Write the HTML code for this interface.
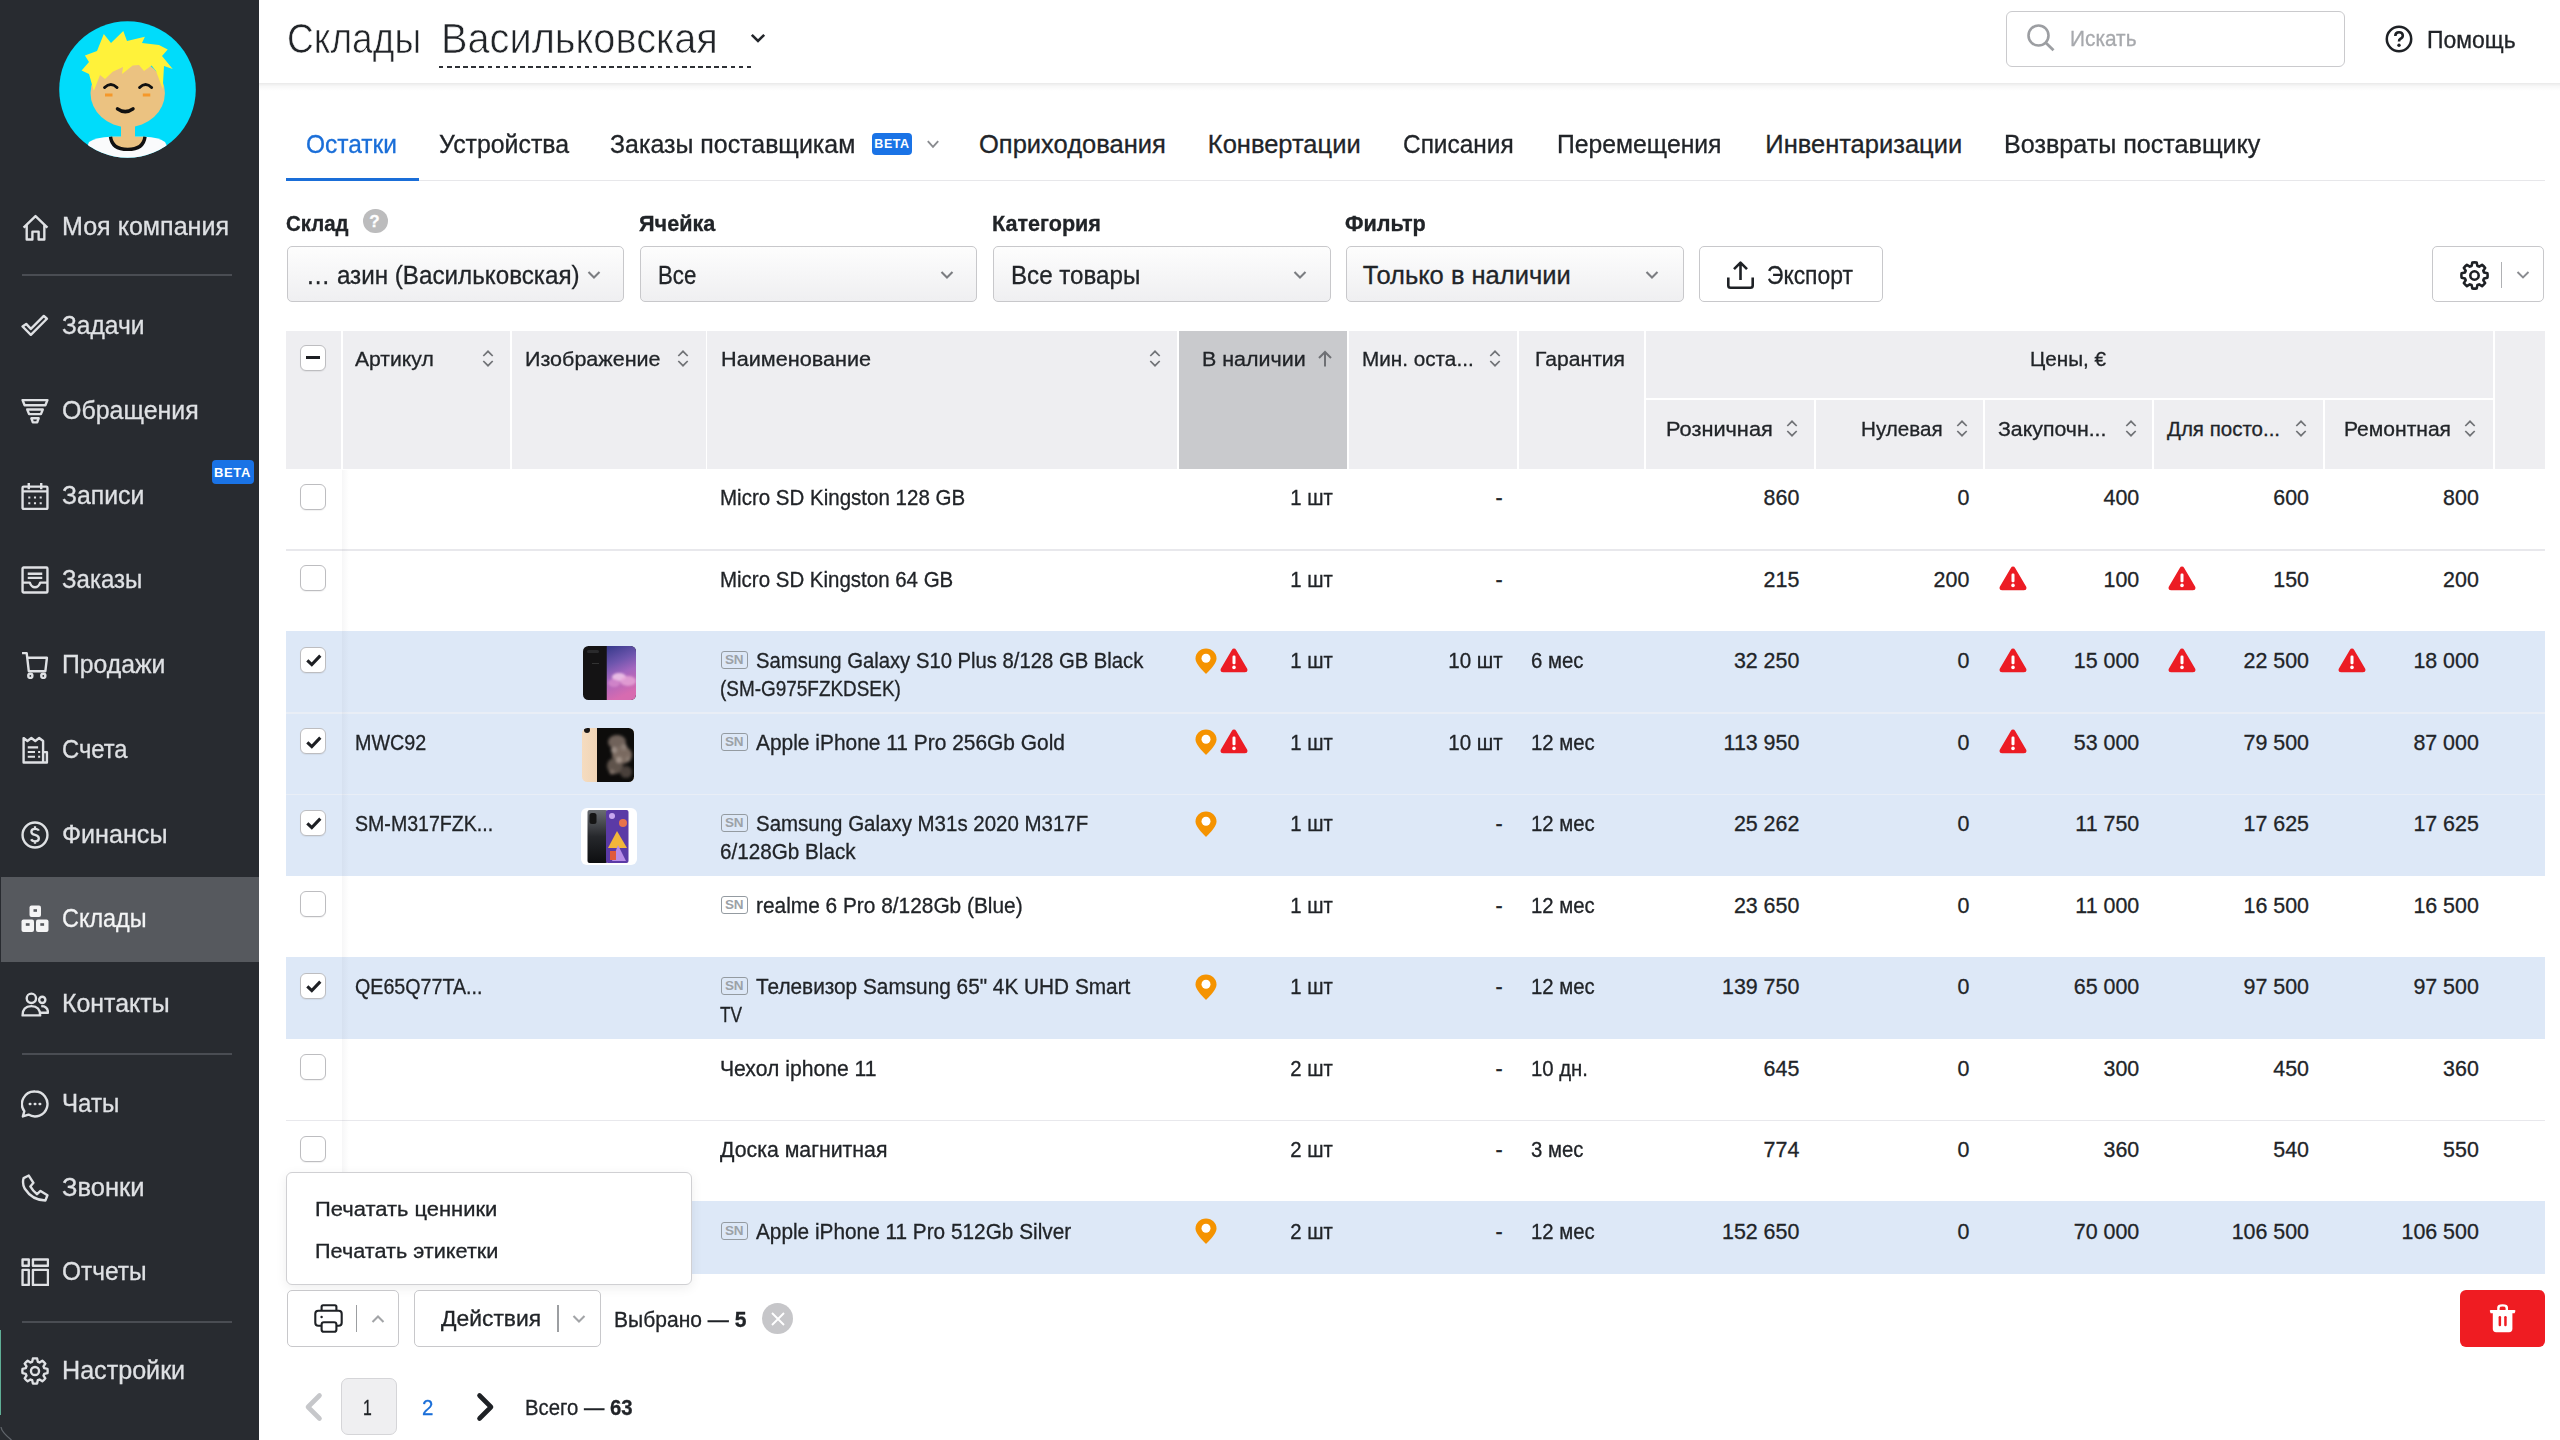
<!DOCTYPE html>
<html lang="ru">
<head>
<meta charset="utf-8">
<title>Склады — Остатки</title>
<style>
*{box-sizing:border-box;margin:0;padding:0}
html,body{width:2560px;height:1440px;overflow:hidden;background:#fff}
body{position:relative;font-family:"Liberation Sans",sans-serif;color:#212428}
.abs{position:absolute}
.t{position:absolute;white-space:nowrap;line-height:1;-webkit-text-stroke-width:0.3px}
.beta{position:absolute;background:#1a73e6;color:#fff;font-weight:bold;font-size:13.5px;border-radius:4px;text-align:center;letter-spacing:.4px}
.sel{position:absolute;top:246.3px;height:56.2px;border:1.5px solid #c8c8cb;border-radius:5px;background:linear-gradient(#fdfdfd,#efeff1)}
.btn{position:absolute;border:1.5px solid #c8c8cb;border-radius:5px;background:#fff}
.cb{position:absolute;width:26.3px;height:26px;border:1.5px solid #bdbdc0;border-radius:6px;background:#fff;box-shadow:0 1px 1px rgba(0,0,0,.06)}
.sn{position:absolute;width:26.5px;height:18px;border:1.7px solid #949ba1;border-radius:3px;color:#9ca2a7;font-size:13.5px;font-weight:bold;line-height:15px;text-align:center;letter-spacing:-0.2px}
</style>
</head>
<body>
<div class="abs" style="left:0;top:0;width:259px;height:1440px;background:#282b30"></div>
<svg class="abs" style="left:58.5px;top:21px" width="137" height="137" viewBox="0 0 137 137">
<defs><clipPath id="avc"><circle cx="68.5" cy="68.5" r="68.3"/></clipPath></defs>
<g clip-path="url(#avc)">
<rect width="137" height="137" fill="#00dcfb"/>
<path d="M24 137 L30 121 Q38 116 51.5 115.7 L86 115.7 Q99 116 106 121 L114 137Z" fill="#fafbfc"/>
<rect x="62" y="98" width="14" height="22" fill="#ebc281"/>
<path d="M51.5 115.7 Q53 128.4 68.7 128.4 Q84.5 128.4 86 115.7Z" fill="#ebc281"/>
<path d="M51.5 115.7 Q53 128.4 68.7 128.4 Q84.5 128.4 86 115.7" stroke="#111" stroke-width="3.4" fill="none"/>
<ellipse cx="68.7" cy="72" rx="37.2" ry="34" fill="#ebc281"/>
<path d="M34.8 70 L30 53 L22.6 49.6 L30 41 L25.9 34.6 L38 30 L44.8 12.9 L52 22 L64.3 10.1 L68 20 L85.9 15.7 L83 22 L100 24 L108.7 28.4 L103 35 L113.7 47.9 L105 45 L103.7 68 L97 50 L92.6 44.6 L85 50 L80 44 L73.7 44.6 L63 53 L64 46 L53.7 50.7 L46 58 L41 54 Z" fill="#fff23a"/>
<path d="M45.6 66.5 Q51.8 60.5 58 66.5 M80.6 66.5 Q86.6 60.5 92.6 66.5" stroke="#111" stroke-width="3" fill="none" stroke-linecap="round"/>
<path d="M46 74 h7.5 M83.8 74 h7.5" stroke="#f5982a" stroke-width="3"/>
<path d="M58.5 87.8 Q66.2 93.5 74 87.8" stroke="#111" stroke-width="3.5" fill="none" stroke-linecap="round"/>
</g></svg>
<div class="abs" style="left:1.4px;top:877px;width:257.6px;height:84.5px;background:#56595e"></div>
<svg class="abs" style="left:21px;top:213.4px" width="28" height="28" viewBox="0 0 27 27" fill="none" stroke="#dfe1e4" stroke-width="2.3" stroke-linejoin="round"><path d="M2.5 14 L14 3 L25.5 14 M5.5 11.5 V25.5 H11 V18 H17 V25.5 H22.5 V11.5"/></svg>
<div class="t" style="top:213.4px;font-size:26px;left:62.0px;color:#dfe1e4;transform:scaleX(0.964);transform-origin:left center;">Моя компания</div>
<svg class="abs" style="left:21px;top:312.1px" width="28" height="28" viewBox="0 0 27 27" fill="none" stroke="#dfe1e4" stroke-width="2.3" stroke-linejoin="round"><path d="M1.5 11 L9.5 19 L25 3.5 L22 0.8 L9.5 13.3 L5 8.5 Z" transform="translate(0,3)"/></svg>
<div class="t" style="top:312.1px;font-size:26px;left:62.0px;color:#dfe1e4;transform:scaleX(0.944);transform-origin:left center;">Задачи</div>
<svg class="abs" style="left:21px;top:396.8px" width="28" height="28" viewBox="0 0 27 27" fill="none" stroke="#dfe1e4" stroke-width="2.3" stroke-linejoin="round"><path d="M1.5 3 H25.5 L23.5 8 H3.5 Z M6 12 H21 L19.2 16.5 H7.8 Z M10 20.5 H17 L15.6 24.5 H11.4 Z"/></svg>
<div class="t" style="top:396.8px;font-size:26px;left:62.0px;color:#dfe1e4;transform:scaleX(0.959);transform-origin:left center;">Обращения</div>
<svg class="abs" style="left:21px;top:481.6px" width="28" height="28" viewBox="0 0 27 27" fill="none" stroke="#dfe1e4" stroke-width="2.3" stroke-linejoin="round"><rect x="1.5" y="4.5" width="24" height="21.5" rx="1"/><path d="M7.5 1 V7 M19.5 1 V7 M1.5 9 H25.5"/><path d="M7 15h2M12.5 15h2M18 15h2M7 20.5h2M12.5 20.5h2M18 20.5h2" stroke-width="2"/></svg>
<div class="t" style="top:481.6px;font-size:26px;left:62.0px;color:#dfe1e4;transform:scaleX(0.955);transform-origin:left center;">Записи</div>
<svg class="abs" style="left:21px;top:566.3px" width="28" height="28" viewBox="0 0 27 27" fill="none" stroke="#dfe1e4" stroke-width="2.3" stroke-linejoin="round"><rect x="1.5" y="1.5" width="24" height="24" rx="1"/><path d="M1.5 16 H8.5 Q10 20.5 13.5 20.5 Q17 20.5 18.5 16 H25.5 M6.5 7.5 H20.5 M6.5 11.5 H20.5"/></svg>
<div class="t" style="top:566.3px;font-size:26px;left:62.0px;color:#dfe1e4;transform:scaleX(0.925);transform-origin:left center;">Заказы</div>
<svg class="abs" style="left:21px;top:651.0px" width="28" height="28" viewBox="0 0 27 27" fill="none" stroke="#dfe1e4" stroke-width="2.3" stroke-linejoin="round"><path d="M1 2 H5.5 L7.5 19.5 H23.5 L25 6.5 H6.5"/><circle cx="9" cy="24" r="2"/><circle cx="21.5" cy="24" r="2"/></svg>
<div class="t" style="top:651.0px;font-size:26px;left:62.0px;color:#dfe1e4;transform:scaleX(0.952);transform-origin:left center;">Продажи</div>
<svg class="abs" style="left:21px;top:735.8px" width="28" height="28" viewBox="0 0 27 27" fill="none" stroke="#dfe1e4" stroke-width="2.3" stroke-linejoin="round"><path d="M2.5 25.5 V2 L6.2 4.8 L10 2 L13.8 4.8 L17.5 2 L21.3 4.8 V25.5 Z M21.3 15.5 H25 V25.5 H2.5"/><path d="M6.5 11h10M6.5 15.5h7M6.5 20h7M16.5 15.5h2M16.5 20h2" stroke-width="2"/></svg>
<div class="t" style="top:735.8px;font-size:26px;left:62.0px;color:#dfe1e4;transform:scaleX(0.913);transform-origin:left center;">Счета</div>
<svg class="abs" style="left:21px;top:820.6px" width="28" height="28" viewBox="0 0 27 27" fill="none" stroke="#dfe1e4" stroke-width="2.3" stroke-linejoin="round"><circle cx="13.5" cy="13.5" r="12"/><path d="M17.2 9.3 Q16.4 7.5 13.5 7.5 Q10 7.5 10 10.3 Q10 12.6 13.5 13.4 Q17.2 14.2 17.2 16.8 Q17.2 19.6 13.5 19.6 Q10.7 19.6 9.8 17.7 M13.5 5 V7.5 M13.5 19.6 V22" stroke-width="2.2"/></svg>
<div class="t" style="top:820.6px;font-size:26px;left:62.0px;color:#dfe1e4;transform:scaleX(0.966);transform-origin:left center;">Финансы</div>
<svg class="abs" style="left:21px;top:905.4px" width="28" height="28" viewBox="0 0 28 28" fill="#f4f4f5"><rect x="8.5" y="0.5" width="11.5" height="11.5" rx="2"/><rect x="0.5" y="14.5" width="12.5" height="12.5" rx="2"/><rect x="15" y="14.5" width="12.5" height="12.5" rx="2"/><rect x="12.5" y="4.2" width="3.5" height="2.6" fill="#56595e"/><rect x="4.8" y="18.2" width="3.8" height="2.6" fill="#56595e"/><rect x="19.3" y="18.2" width="3.8" height="2.6" fill="#56595e"/></svg>
<div class="t" style="top:905.4px;font-size:26px;left:62.0px;color:#f3f4f5;transform:scaleX(0.900);transform-origin:left center;">Склады</div>
<svg class="abs" style="left:21px;top:990.2px" width="28" height="28" viewBox="0 0 27 27" fill="none" stroke="#dfe1e4" stroke-width="2.3" stroke-linejoin="round"><circle cx="10" cy="8" r="4.5"/><circle cx="20.5" cy="9.5" r="3"/><path d="M1.5 24.5 Q1.5 15.5 10 15.5 Q18.5 15.5 18.5 24.5 Z M19.5 15.5 Q26 15.5 26 22 H18.8"/></svg>
<div class="t" style="top:990.2px;font-size:26px;left:62.0px;color:#dfe1e4;transform:scaleX(0.958);transform-origin:left center;">Контакты</div>
<svg class="abs" style="left:21px;top:1089.5px" width="28" height="28" viewBox="0 0 27 27" fill="none" stroke="#dfe1e4" stroke-width="2.3" stroke-linejoin="round"><path d="M13.5 1.5 A12 12 0 1 1 7.2 23.7 L1.8 25.5 L3.2 20.5 A12 12 0 0 1 13.5 1.5 Z"/><path d="M8.5 13.5h.5M13.3 13.5h.5M18 13.5h.5" stroke-width="2.4" stroke-linecap="round"/></svg>
<div class="t" style="top:1089.5px;font-size:26px;left:62.0px;color:#dfe1e4;transform:scaleX(0.926);transform-origin:left center;">Чаты</div>
<svg class="abs" style="left:21px;top:1173.9px" width="28" height="28" viewBox="0 0 27 27" fill="none" stroke="#dfe1e4" stroke-width="2.3" stroke-linejoin="round"><path d="M2.5 4 L7.5 1.5 L12 8.5 L9 12 Q11.5 16.5 15.5 19.5 L18.8 16.3 L25.5 20.5 L23.5 25.5 Q11 25.5 3.5 14 Q1 9 2.5 4 Z"/></svg>
<div class="t" style="top:1173.9px;font-size:26px;left:62.0px;color:#dfe1e4;transform:scaleX(0.982);transform-origin:left center;">Звонки</div>
<svg class="abs" style="left:21px;top:1258.4px" width="28" height="28" viewBox="0 0 27 27" fill="none" stroke="#dfe1e4" stroke-width="2.3" stroke-linejoin="round"><rect x="1.5" y="1.5" width="6" height="6"/><rect x="11.5" y="1.5" width="14.5" height="6"/><rect x="1.5" y="11.5" width="6" height="14.5"/><rect x="11.5" y="11.5" width="14.5" height="14.5"/></svg>
<div class="t" style="top:1258.4px;font-size:26px;left:62.0px;color:#dfe1e4;transform:scaleX(0.940);transform-origin:left center;">Отчеты</div>
<svg class="abs" style="left:21px;top:1357.3px" width="28" height="28" viewBox="0 0 27 27" fill="none" stroke="#dfe1e4" stroke-width="2.3" stroke-linejoin="round"><path d="M10.78 4.61 L11.49 1.47 A12.2 12.2 0 0 1 15.51 1.47 L16.22 4.61 A9.3 9.3 0 0 1 17.87 5.29 L20.58 3.57 A12.2 12.2 0 0 1 23.43 6.42 L21.71 9.13 A9.3 9.3 0 0 1 22.39 10.78 L25.53 11.49 A12.2 12.2 0 0 1 25.53 15.51 L22.39 16.22 A9.3 9.3 0 0 1 21.71 17.87 L23.43 20.58 A12.2 12.2 0 0 1 20.58 23.43 L17.87 21.71 A9.3 9.3 0 0 1 16.22 22.39 L15.51 25.53 A12.2 12.2 0 0 1 11.49 25.53 L10.78 22.39 A9.3 9.3 0 0 1 9.13 21.71 L6.42 23.43 A12.2 12.2 0 0 1 3.57 20.58 L5.29 17.87 A9.3 9.3 0 0 1 4.61 16.22 L1.47 15.51 A12.2 12.2 0 0 1 1.47 11.49 L4.61 10.78 A9.3 9.3 0 0 1 5.29 9.13 L3.57 6.42 A12.2 12.2 0 0 1 6.42 3.57 L9.13 5.29 A9.3 9.3 0 0 1 10.78 4.61Z"/><circle cx="13.5" cy="13.5" r="3.9"/></svg>
<div class="t" style="top:1357.3px;font-size:26px;left:62.0px;color:#dfe1e4;transform:scaleX(0.966);transform-origin:left center;">Настройки</div>
<div class="abs" style="left:21.5px;top:274px;width:210.5px;height:2px;background:#4a4d53"></div>
<div class="abs" style="left:21.5px;top:1052.5px;width:210.5px;height:2px;background:#4a4d53"></div>
<div class="abs" style="left:21.5px;top:1320.5px;width:210.5px;height:2px;background:#4a4d53"></div>
<div class="beta" style="left:211.5px;top:459.5px;width:42px;height:24px;line-height:25px;font-size:13px;letter-spacing:.6px">BETA</div>
<div class="abs" style="left:0;top:1330px;width:1.4px;height:84.5px;background:#5fae95"></div>
<svg class="abs" style="left:0;top:1420px" width="14" height="20" viewBox="0 0 14 20"><path d="M1 7 Q1.5 12 11.5 20" stroke="#60656b" stroke-width="1.3" fill="none"/></svg>
<div class="abs" style="left:259px;top:83px;width:2301px;height:8px;background:linear-gradient(rgba(0,0,0,.085),rgba(0,0,0,.03) 40%,rgba(0,0,0,0))"></div>
<div class="t" style="top:17.4px;font-size:43px;left:287.3px;transform:scaleX(0.863);transform-origin:left center;-webkit-text-stroke:0.7px #fff;">Склады</div>
<div class="t" style="top:17.4px;font-size:43px;left:441.2px;transform:scaleX(0.924);transform-origin:left center;-webkit-text-stroke:0.7px #fff;">Васильковская</div>
<div class="abs" style="left:438.5px;top:65.5px;width:313px;height:2px;background:repeating-linear-gradient(90deg,#2e3136 0 4.5px,transparent 4.5px 8.1px)"></div>
<svg class="abs" style="left:750px;top:33px" width="16" height="10" viewBox="0 0 16 10"><path d="M1.8 1.8 L8 8 L14.2 1.8" stroke="#23262b" stroke-width="2.6" fill="none"/></svg>
<div class="abs" style="left:2006px;top:10.5px;width:338.5px;height:56.5px;border:1.5px solid #cacacd;border-radius:6px;background:#fff"></div>
<svg class="abs" style="left:2026px;top:22.5px" width="30" height="29" viewBox="0 0 30 29"><circle cx="12.5" cy="12.5" r="10" stroke="#9c9ea2" stroke-width="2.6" fill="none"/><path d="M19.8 19.8 L27.5 27.3" stroke="#9c9ea2" stroke-width="2.8"/></svg>
<div class="t" style="top:27.7px;font-size:22px;left:2070.0px;color:#a7a9ad;transform:scaleX(0.947);transform-origin:left center;">Искать</div>
<svg class="abs" style="left:2385px;top:25px" width="28" height="28" viewBox="0 0 28 28"><circle cx="14" cy="14" r="12.2" stroke="#1e2125" stroke-width="2.5" fill="none"/><path d="M10.3 11 Q10.3 7.2 14 7.2 Q17.8 7.2 17.8 10.6 Q17.8 13 15.2 14 Q14 14.6 14 16.6" stroke="#1e2125" stroke-width="2.6" fill="none"/><circle cx="14" cy="20.3" r="1.7" fill="#1e2125"/></svg>
<div class="t" style="top:28.5px;font-size:23.5px;left:2426.5px;transform:scaleX(0.977);transform-origin:left center;">Помощь</div>
<div class="abs" style="left:286px;top:179.5px;width:2259px;height:1.5px;background:#e7e7ea"></div>
<div class="abs" style="left:286.3px;top:177.8px;width:133px;height:3.4px;background:#1a6ed8"></div>
<div class="t" style="top:131.5px;font-size:25.5px;left:306.0px;color:#1a6ed8;transform:scaleX(0.961);transform-origin:left center;">Остатки</div>
<div class="t" style="top:131.5px;font-size:25.5px;left:438.5px;transform:scaleX(0.975);transform-origin:left center;">Устройства</div>
<div class="t" style="top:131.5px;font-size:25.5px;left:610.0px;transform:scaleX(0.978);transform-origin:left center;">Заказы поставщикам</div>
<div class="t" style="top:131.5px;font-size:25.5px;left:979.0px;">Оприходования</div>
<div class="t" style="top:131.5px;font-size:25.5px;left:1207.8px;">Конвертации</div>
<div class="t" style="top:131.5px;font-size:25.5px;left:1403.3px;transform:scaleX(0.958);transform-origin:left center;">Списания</div>
<div class="t" style="top:131.5px;font-size:25.5px;left:1557.0px;transform:scaleX(0.970);transform-origin:left center;">Перемещения</div>
<div class="t" style="top:131.5px;font-size:25.5px;left:1765.3px;">Инвентаризации</div>
<div class="t" style="top:131.5px;font-size:25.5px;left:2004.0px;transform:scaleX(0.985);transform-origin:left center;">Возвраты поставщику</div>
<div class="beta" style="left:872px;top:132.5px;width:40px;height:22.5px;line-height:23.5px;font-size:12.5px;letter-spacing:.6px">BETA</div>
<svg class="abs" style="left:925.5px;top:139px" width="14" height="11" viewBox="0 0 14 11"><path d="M1.8 2.2 L7 7.8 L12.2 2.2" stroke="#8a8c90" stroke-width="1.9" fill="none"/></svg>
<div class="t" style="top:214.3px;font-size:21.5px;left:286.0px;font-weight:bold;transform:scaleX(0.950);transform-origin:left center;">Склад</div>
<div class="abs" style="left:363px;top:208.8px;width:24.5px;height:24.5px;border-radius:50%;background:#bcbcbd"></div>
<div class="t" style="top:213.1px;font-size:17px;left:369.3px;color:#fff;font-weight:bold;">?</div>
<div class="t" style="top:214.3px;font-size:21.5px;left:638.5px;font-weight:bold;transform:scaleX(1.007);transform-origin:left center;">Ячейка</div>
<div class="t" style="top:214.3px;font-size:21.5px;left:992.0px;font-weight:bold;transform:scaleX(1.004);transform-origin:left center;">Категория</div>
<div class="t" style="top:214.3px;font-size:21.5px;left:1344.5px;font-weight:bold;transform:scaleX(1.007);transform-origin:left center;">Фильтр</div>
<div class="sel" style="left:286.7px;width:337.6px"></div>
<div class="t" style="top:262.8px;font-size:25.5px;left:306.0px;transform:scaleX(0.949);transform-origin:left center;">… азин (Васильковская)</div>
<svg class="abs" style="left:586.5px;top:270px" width="14" height="10" viewBox="0 0 14 10"><path d="M1.5 2 L7 7.5 L12.5 2" stroke="#7b7d81" stroke-width="2.1" fill="none"/></svg>
<div class="sel" style="left:639.7px;width:337.8px"></div>
<div class="t" style="top:262.8px;font-size:25.5px;left:657.8px;transform:scaleX(0.871);transform-origin:left center;">Все</div>
<svg class="abs" style="left:939.5px;top:270px" width="14" height="10" viewBox="0 0 14 10"><path d="M1.5 2 L7 7.5 L12.5 2" stroke="#7b7d81" stroke-width="2.1" fill="none"/></svg>
<div class="sel" style="left:992.5px;width:338.3px"></div>
<div class="t" style="top:262.8px;font-size:25.5px;left:1011.0px;transform:scaleX(0.947);transform-origin:left center;">Все товары</div>
<svg class="abs" style="left:1292.5px;top:270px" width="14" height="10" viewBox="0 0 14 10"><path d="M1.5 2 L7 7.5 L12.5 2" stroke="#7b7d81" stroke-width="2.1" fill="none"/></svg>
<div class="sel" style="left:1345.5px;width:338.3px"></div>
<div class="t" style="top:262.8px;font-size:25.5px;left:1362.8px;">Только в наличии</div>
<svg class="abs" style="left:1645.3px;top:270px" width="14" height="10" viewBox="0 0 14 10"><path d="M1.5 2 L7 7.5 L12.5 2" stroke="#7b7d81" stroke-width="2.1" fill="none"/></svg>
<div class="btn" style="left:1699px;top:246.3px;width:183.5px;height:56.2px"></div>
<svg class="abs" style="left:1726px;top:260px" width="29" height="30" viewBox="0 0 29 30"><path d="M14.5 20 V3 M8 9.2 L14.5 2.7 L21 9.2" stroke="#1e2125" stroke-width="2.6" fill="none" stroke-linejoin="round"/><path d="M2.3 17.5 V25.5 Q2.3 27.8 4.6 27.8 H24.4 Q26.7 27.8 26.7 25.5 V17.5" stroke="#1e2125" stroke-width="2.6" fill="none"/></svg>
<div class="t" style="top:262.8px;font-size:25.5px;left:1767.0px;transform:scaleX(0.896);transform-origin:left center;">Экспорт</div>
<div class="btn" style="left:2432px;top:246.3px;width:112.3px;height:56.2px"></div>
<svg class="abs" style="left:2459.5px;top:260.8px" width="29" height="29" viewBox="0 0 27 27" fill="none" stroke="#1e2125" stroke-width="2.4" stroke-linejoin="round"><path d="M10.78 4.61 L11.49 1.47 A12.2 12.2 0 0 1 15.51 1.47 L16.22 4.61 A9.3 9.3 0 0 1 17.87 5.29 L20.58 3.57 A12.2 12.2 0 0 1 23.43 6.42 L21.71 9.13 A9.3 9.3 0 0 1 22.39 10.78 L25.53 11.49 A12.2 12.2 0 0 1 25.53 15.51 L22.39 16.22 A9.3 9.3 0 0 1 21.71 17.87 L23.43 20.58 A12.2 12.2 0 0 1 20.58 23.43 L17.87 21.71 A9.3 9.3 0 0 1 16.22 22.39 L15.51 25.53 A12.2 12.2 0 0 1 11.49 25.53 L10.78 22.39 A9.3 9.3 0 0 1 9.13 21.71 L6.42 23.43 A12.2 12.2 0 0 1 3.57 20.58 L5.29 17.87 A9.3 9.3 0 0 1 4.61 16.22 L1.47 15.51 A12.2 12.2 0 0 1 1.47 11.49 L4.61 10.78 A9.3 9.3 0 0 1 5.29 9.13 L3.57 6.42 A12.2 12.2 0 0 1 6.42 3.57 L9.13 5.29 A9.3 9.3 0 0 1 10.78 4.61Z"/><circle cx="13.5" cy="13.5" r="3.9"/></svg>
<div class="abs" style="left:2500.5px;top:261.5px;width:1.6px;height:26.5px;background:#b0b1b4"></div>
<svg class="abs" style="left:2516px;top:269.5px" width="14" height="10" viewBox="0 0 14 10"><path d="M1.5 2 L7 7.5 L12.5 2" stroke="#8a8c90" stroke-width="1.9" fill="none"/></svg>
<div class="abs" style="left:286px;top:331px;width:54.5px;height:138.5px;background:#eeeef1"></div>
<div class="abs" style="left:342.5px;top:331px;width:167.5px;height:138.5px;background:#eeeef1"></div>
<div class="abs" style="left:512px;top:331px;width:193.5px;height:138.5px;background:#eeeef1"></div>
<div class="abs" style="left:707px;top:331px;width:470px;height:138.5px;background:#eeeef1"></div>
<div class="abs" style="left:1179px;top:331px;width:168px;height:138.5px;background:#c9cacd"></div>
<div class="abs" style="left:1349px;top:331px;width:167.5px;height:138.5px;background:#eeeef1"></div>
<div class="abs" style="left:1518.5px;top:331px;width:125.5px;height:138.5px;background:#eeeef1"></div>
<div class="abs" style="left:1646px;top:331px;width:846.5px;height:67px;background:#eeeef1"></div>
<div class="abs" style="left:2494.5px;top:331px;width:50.5px;height:138.5px;background:#eeeef1"></div>
<div class="abs" style="left:1646px;top:400px;width:167.5px;height:69.5px;background:#eeeef1"></div>
<div class="abs" style="left:1815.5px;top:400px;width:167.5px;height:69.5px;background:#eeeef1"></div>
<div class="abs" style="left:1985px;top:400px;width:167px;height:69.5px;background:#eeeef1"></div>
<div class="abs" style="left:2154px;top:400px;width:168.5px;height:69.5px;background:#eeeef1"></div>
<div class="abs" style="left:2324.5px;top:400px;width:168.0px;height:69.5px;background:#eeeef1"></div>
<div class="cb" style="left:300.2px;top:344.7px"><div style="position:absolute;left:4.8px;top:10.3px;width:14px;height:3.5px;background:#1d1f23"></div></div>
<div class="t" style="top:349.0px;font-size:20.5px;left:355.0px;transform:scaleX(1.030);transform-origin:left center;">Артикул</div>
<svg class="abs" style="left:482.3px;top:349.5px" width="12" height="17" viewBox="0 0 12 17"><path d="M1.3 6 L6 1.3 L10.7 6 M1.3 11 L6 15.7 L10.7 11" stroke="#707276" stroke-width="1.7" fill="none"/></svg>
<div class="t" style="top:349.0px;font-size:20.5px;left:525.0px;transform:scaleX(1.050);transform-origin:left center;">Изображение</div>
<svg class="abs" style="left:676.8px;top:349.5px" width="12" height="17" viewBox="0 0 12 17"><path d="M1.3 6 L6 1.3 L10.7 6 M1.3 11 L6 15.7 L10.7 11" stroke="#707276" stroke-width="1.7" fill="none"/></svg>
<div class="t" style="top:349.0px;font-size:20.5px;left:720.5px;transform:scaleX(1.056);transform-origin:left center;">Наименование</div>
<svg class="abs" style="left:1148.5px;top:349.5px" width="12" height="17" viewBox="0 0 12 17"><path d="M1.3 6 L6 1.3 L10.7 6 M1.3 11 L6 15.7 L10.7 11" stroke="#707276" stroke-width="1.7" fill="none"/></svg>
<div class="t" style="top:349.0px;font-size:20.5px;left:1202.0px;transform:scaleX(1.046);transform-origin:left center;">В наличии</div>
<svg class="abs" style="left:1317px;top:349.5px" width="16" height="17" viewBox="0 0 16 17"><path d="M8 16.5 V2 M2 8 L8 2 L14 8" stroke="#6e7074" stroke-width="2" fill="none"/></svg>
<div class="t" style="top:349.0px;font-size:20.5px;left:1362.0px;transform:scaleX(1.010);transform-origin:left center;">Мин. оста...</div>
<svg class="abs" style="left:1488.7px;top:349.5px" width="12" height="17" viewBox="0 0 12 17"><path d="M1.3 6 L6 1.3 L10.7 6 M1.3 11 L6 15.7 L10.7 11" stroke="#707276" stroke-width="1.7" fill="none"/></svg>
<div class="t" style="top:349.0px;font-size:20.5px;left:1535.0px;transform:scaleX(1.030);transform-origin:left center;">Гарантия</div>
<div class="t" style="top:348.5px;font-size:20.5px;left:2030.0px;transform:scaleX(1.008);transform-origin:left center;">Цены, €</div>
<div class="t" style="top:418.8px;font-size:20.5px;left:1666.0px;transform:scaleX(1.061);transform-origin:left center;">Розничная</div>
<svg class="abs" style="left:1785.5px;top:419.5px" width="12" height="17" viewBox="0 0 12 17"><path d="M1.3 6 L6 1.3 L10.7 6 M1.3 11 L6 15.7 L10.7 11" stroke="#707276" stroke-width="1.7" fill="none"/></svg>
<div class="t" style="top:418.8px;font-size:20.5px;left:1861.0px;transform:scaleX(1.006);transform-origin:left center;">Нулевая</div>
<svg class="abs" style="left:1955.5px;top:419.5px" width="12" height="17" viewBox="0 0 12 17"><path d="M1.3 6 L6 1.3 L10.7 6 M1.3 11 L6 15.7 L10.7 11" stroke="#707276" stroke-width="1.7" fill="none"/></svg>
<div class="t" style="top:418.8px;font-size:20.5px;left:1997.6px;transform:scaleX(1.039);transform-origin:left center;">Закупочн...</div>
<svg class="abs" style="left:2125px;top:419.5px" width="12" height="17" viewBox="0 0 12 17"><path d="M1.3 6 L6 1.3 L10.7 6 M1.3 11 L6 15.7 L10.7 11" stroke="#707276" stroke-width="1.7" fill="none"/></svg>
<div class="t" style="top:418.8px;font-size:20.5px;left:2167.0px;">Для посто...</div>
<svg class="abs" style="left:2294.7px;top:419.5px" width="12" height="17" viewBox="0 0 12 17"><path d="M1.3 6 L6 1.3 L10.7 6 M1.3 11 L6 15.7 L10.7 11" stroke="#707276" stroke-width="1.7" fill="none"/></svg>
<div class="t" style="top:418.8px;font-size:20.5px;left:2344.0px;transform:scaleX(1.027);transform-origin:left center;">Ремонтная</div>
<svg class="abs" style="left:2464.3px;top:419.5px" width="12" height="17" viewBox="0 0 12 17"><path d="M1.3 6 L6 1.3 L10.7 6 M1.3 11 L6 15.7 L10.7 11" stroke="#707276" stroke-width="1.7" fill="none"/></svg>
<div class="abs" style="left:286px;top:469.0px;width:2259px;height:81.0px;background:#ffffff"></div>
<div class="abs" style="left:286px;top:549.3px;width:2259px;height:1.5px;background:#e8e8ec"></div>
<div class="cb" style="left:300.2px;top:483.9px"></div>
<div class="t" style="top:488.0px;font-size:21.4px;left:720.3px;transform:scaleX(0.959);transform-origin:left center;">Micro SD Kingston 128 GB</div>
<div class="t" style="top:488.0px;font-size:21.4px;right:1227.0px;transform:scaleX(0.949);transform-origin:right center;">1 шт</div>
<div class="t" style="top:488.0px;font-size:21.4px;right:1057.5px;">-</div>
<div class="t" style="top:488.0px;font-size:21.4px;right:760.7px;">860</div>
<div class="t" style="top:488.0px;font-size:21.4px;right:590.7px;">0</div>
<div class="t" style="top:488.0px;font-size:21.4px;right:420.8px;">400</div>
<div class="t" style="top:488.0px;font-size:21.4px;right:251.0px;">600</div>
<div class="t" style="top:488.0px;font-size:21.4px;right:81.2px;">800</div>
<div class="abs" style="left:286px;top:550.5px;width:2259px;height:81.0px;background:#ffffff"></div>
<div class="cb" style="left:300.2px;top:565.4px"></div>
<div class="t" style="top:569.5px;font-size:21.4px;left:720.3px;transform:scaleX(0.957);transform-origin:left center;">Micro SD Kingston 64 GB</div>
<div class="t" style="top:569.5px;font-size:21.4px;right:1227.0px;transform:scaleX(0.949);transform-origin:right center;">1 шт</div>
<div class="t" style="top:569.5px;font-size:21.4px;right:1057.5px;">-</div>
<div class="t" style="top:569.5px;font-size:21.4px;right:760.7px;">215</div>
<div class="t" style="top:569.5px;font-size:21.4px;right:590.7px;">200</div>
<div class="t" style="top:569.5px;font-size:21.4px;right:420.8px;">100</div>
<svg class="abs" style="left:1998.5px;top:566.1px" width="28" height="25" viewBox="0 0 28 25"><path d="M14 0.6 Q15.4 0.6 16.2 2 L27.2 20.8 Q28.3 24.2 25 24.2 H3 Q-0.3 24.2 0.8 20.8 L11.8 2 Q12.6 0.6 14 0.6 Z" fill="#ec1c24"/><rect x="12.5" y="7.6" width="3" height="8.6" rx="1.2" fill="#fff"/><circle cx="14" cy="19.4" r="1.8" fill="#fff"/></svg>
<div class="t" style="top:569.5px;font-size:21.4px;right:251.0px;">150</div>
<svg class="abs" style="left:2168.3px;top:566.1px" width="28" height="25" viewBox="0 0 28 25"><path d="M14 0.6 Q15.4 0.6 16.2 2 L27.2 20.8 Q28.3 24.2 25 24.2 H3 Q-0.3 24.2 0.8 20.8 L11.8 2 Q12.6 0.6 14 0.6 Z" fill="#ec1c24"/><rect x="12.5" y="7.6" width="3" height="8.6" rx="1.2" fill="#fff"/><circle cx="14" cy="19.4" r="1.8" fill="#fff"/></svg>
<div class="t" style="top:569.5px;font-size:21.4px;right:81.2px;">200</div>
<div class="abs" style="left:286px;top:630.5px;width:2259px;height:82.5px;background:#dde8f7"></div>
<div class="abs" style="left:286px;top:712.3px;width:2259px;height:2px;background:#e9eef6"></div>
<div class="cb" style="left:300.2px;top:646.9px"><svg style="position:absolute;left:3.5px;top:4.5px" width="18" height="16" viewBox="0 0 18 16"><path d="M2.3 8.3 L6.8 12.6 L15.3 3.6" stroke="#1d1f23" stroke-width="3.1" fill="none"/></svg></div>
<svg class="abs" style="left:582.8px;top:646.2px" width="53" height="54" viewBox="0 0 53 54"><defs><linearGradient id="s10g" x1="0" y1="0" x2="0.25" y2="1"><stop offset="0" stop-color="#35398a"/><stop offset="0.35" stop-color="#6d55ad"/><stop offset="0.6" stop-color="#a466bf"/><stop offset="1" stop-color="#d76bb0"/></linearGradient><filter id="s10f" x="-20%" y="-20%" width="140%" height="140%"><feGaussianBlur stdDeviation="1.2"/></filter><clipPath id="s10c"><rect width="53" height="54" rx="5.5"/></clipPath></defs><g clip-path="url(#s10c)"><rect width="53" height="54" fill="#141314"/><rect x="23.5" y="0" width="29.5" height="54" fill="url(#s10g)"/><g filter="url(#s10f)" clip-path="url(#s10r)"><ellipse cx="36" cy="31" rx="7" ry="4" fill="#f2c9ea" opacity=".85"/><ellipse cx="45" cy="35" rx="8" ry="5" fill="#e9a6d8" opacity=".8"/><ellipse cx="31" cy="37" rx="6" ry="4" fill="#dc8fcf" opacity=".7"/></g><rect x="20.5" y="0" width="3" height="54" fill="#141314"/><rect x="4" y="4" width="12" height="3" rx="1.5" fill="#2a2a2c"/><rect x="9" y="17" width="7" height="1" fill="#333"/></g></svg>
<div class="sn" style="left:721px;top:651.0px">SN</div>
<div class="t" style="top:651.0px;font-size:21.4px;left:755.5px;transform:scaleX(0.947);transform-origin:left center;">Samsung Galaxy S10 Plus 8/128 GB Black</div>
<div class="t" style="top:679.3px;font-size:21.4px;left:720.3px;transform:scaleX(0.885);transform-origin:left center;">(SM-G975FZKDSEK)</div>
<svg class="abs" style="left:1195px;top:647.5px" width="22" height="26" viewBox="0 0 22 26"><path d="M11 0.5 C5 0.5 0.5 5 0.5 10.5 C0.5 16.5 11 25.8 11 25.8 C11 25.8 21.5 16.5 21.5 10.5 C21.5 5 17 0.5 11 0.5 Z" fill="#f59300"/><circle cx="11" cy="10.2" r="4.5" fill="#fff"/></svg>
<svg class="abs" style="left:1219.5px;top:647.6px" width="28" height="25" viewBox="0 0 28 25"><path d="M14 0.6 Q15.4 0.6 16.2 2 L27.2 20.8 Q28.3 24.2 25 24.2 H3 Q-0.3 24.2 0.8 20.8 L11.8 2 Q12.6 0.6 14 0.6 Z" fill="#ec1c24"/><rect x="12.5" y="7.6" width="3" height="8.6" rx="1.2" fill="#fff"/><circle cx="14" cy="19.4" r="1.8" fill="#fff"/></svg>
<div class="t" style="top:651.0px;font-size:21.4px;right:1227.0px;transform:scaleX(0.949);transform-origin:right center;">1 шт</div>
<div class="t" style="top:651.0px;font-size:21.4px;right:1057.5px;transform:scaleX(0.961);transform-origin:right center;">10 шт</div>
<div class="t" style="top:651.0px;font-size:21.4px;left:1531.3px;transform:scaleX(0.952);transform-origin:left center;">6 мес</div>
<div class="t" style="top:651.0px;font-size:21.4px;right:760.7px;">32 250</div>
<div class="t" style="top:651.0px;font-size:21.4px;right:590.7px;">0</div>
<div class="t" style="top:651.0px;font-size:21.4px;right:420.8px;">15 000</div>
<svg class="abs" style="left:1998.5px;top:647.6px" width="28" height="25" viewBox="0 0 28 25"><path d="M14 0.6 Q15.4 0.6 16.2 2 L27.2 20.8 Q28.3 24.2 25 24.2 H3 Q-0.3 24.2 0.8 20.8 L11.8 2 Q12.6 0.6 14 0.6 Z" fill="#ec1c24"/><rect x="12.5" y="7.6" width="3" height="8.6" rx="1.2" fill="#fff"/><circle cx="14" cy="19.4" r="1.8" fill="#fff"/></svg>
<div class="t" style="top:651.0px;font-size:21.4px;right:251.0px;">22 500</div>
<svg class="abs" style="left:2168.3px;top:647.6px" width="28" height="25" viewBox="0 0 28 25"><path d="M14 0.6 Q15.4 0.6 16.2 2 L27.2 20.8 Q28.3 24.2 25 24.2 H3 Q-0.3 24.2 0.8 20.8 L11.8 2 Q12.6 0.6 14 0.6 Z" fill="#ec1c24"/><rect x="12.5" y="7.6" width="3" height="8.6" rx="1.2" fill="#fff"/><circle cx="14" cy="19.4" r="1.8" fill="#fff"/></svg>
<div class="t" style="top:651.0px;font-size:21.4px;right:81.2px;">18 000</div>
<svg class="abs" style="left:2338px;top:647.6px" width="28" height="25" viewBox="0 0 28 25"><path d="M14 0.6 Q15.4 0.6 16.2 2 L27.2 20.8 Q28.3 24.2 25 24.2 H3 Q-0.3 24.2 0.8 20.8 L11.8 2 Q12.6 0.6 14 0.6 Z" fill="#ec1c24"/><rect x="12.5" y="7.6" width="3" height="8.6" rx="1.2" fill="#fff"/><circle cx="14" cy="19.4" r="1.8" fill="#fff"/></svg>
<div class="abs" style="left:286px;top:713.5px;width:2259px;height:81.0px;background:#dde8f7"></div>
<div class="abs" style="left:286px;top:793.8px;width:2259px;height:2px;background:#e9eef6"></div>
<div class="cb" style="left:300.2px;top:728.4px"><svg style="position:absolute;left:3.5px;top:4.5px" width="18" height="16" viewBox="0 0 18 16"><path d="M2.3 8.3 L6.8 12.6 L15.3 3.6" stroke="#1d1f23" stroke-width="3.1" fill="none"/></svg></div>
<div class="t" style="top:732.5px;font-size:21.4px;left:355.3px;transform:scaleX(0.922);transform-origin:left center;">MWC92</div>
<svg class="abs" style="left:581.8px;top:728.0px" width="52" height="54" viewBox="0 0 52 54"><defs><linearGradient id="ipgold" x1="0" x2="1"><stop offset="0" stop-color="#f5dcc0"/><stop offset="1" stop-color="#e3c29d"/></linearGradient><filter id="ipf" x="-20%" y="-20%" width="140%" height="140%"><feGaussianBlur stdDeviation="1.4"/></filter><clipPath id="ipc"><rect width="52" height="54" rx="5.5"/></clipPath></defs><g clip-path="url(#ipc)"><rect width="52" height="54" fill="url(#ipgold)"/><rect x="15" y="0" width="37" height="54" fill="#0d0c0b"/><g filter="url(#ipf)"><ellipse cx="35" cy="14" rx="9" ry="7" fill="#6f625a"/><ellipse cx="40" cy="27" rx="10" ry="9" fill="#7a6b61"/><ellipse cx="33" cy="38" rx="8" ry="8" fill="#5e534c"/><ellipse cx="44" cy="44" rx="6" ry="6" fill="#4a413b"/><circle cx="32" cy="22" r="3" fill="#9d8f86"/><circle cx="42" cy="19" r="3" fill="#8d7f76"/><circle cx="37" cy="32" r="3" fill="#a39388"/><circle cx="30" cy="44" r="2.5" fill="#7d6f66"/><circle cx="46" cy="31" r="2.5" fill="#8a7c72"/></g><circle cx="5" cy="2" r="3" fill="#1a1716"/></g></svg>
<div class="sn" style="left:721px;top:732.5px">SN</div>
<div class="t" style="top:732.5px;font-size:21.4px;left:755.5px;transform:scaleX(0.978);transform-origin:left center;">Apple iPhone 11 Pro 256Gb Gold</div>
<svg class="abs" style="left:1195px;top:729.0px" width="22" height="26" viewBox="0 0 22 26"><path d="M11 0.5 C5 0.5 0.5 5 0.5 10.5 C0.5 16.5 11 25.8 11 25.8 C11 25.8 21.5 16.5 21.5 10.5 C21.5 5 17 0.5 11 0.5 Z" fill="#f59300"/><circle cx="11" cy="10.2" r="4.5" fill="#fff"/></svg>
<svg class="abs" style="left:1219.5px;top:729.1px" width="28" height="25" viewBox="0 0 28 25"><path d="M14 0.6 Q15.4 0.6 16.2 2 L27.2 20.8 Q28.3 24.2 25 24.2 H3 Q-0.3 24.2 0.8 20.8 L11.8 2 Q12.6 0.6 14 0.6 Z" fill="#ec1c24"/><rect x="12.5" y="7.6" width="3" height="8.6" rx="1.2" fill="#fff"/><circle cx="14" cy="19.4" r="1.8" fill="#fff"/></svg>
<div class="t" style="top:732.5px;font-size:21.4px;right:1227.0px;transform:scaleX(0.949);transform-origin:right center;">1 шт</div>
<div class="t" style="top:732.5px;font-size:21.4px;right:1057.5px;transform:scaleX(0.961);transform-origin:right center;">10 шт</div>
<div class="t" style="top:732.5px;font-size:21.4px;left:1531.3px;transform:scaleX(0.950);transform-origin:left center;">12 мес</div>
<div class="t" style="top:732.5px;font-size:21.4px;right:760.7px;">113 950</div>
<div class="t" style="top:732.5px;font-size:21.4px;right:590.7px;">0</div>
<div class="t" style="top:732.5px;font-size:21.4px;right:420.8px;">53 000</div>
<svg class="abs" style="left:1998.5px;top:729.1px" width="28" height="25" viewBox="0 0 28 25"><path d="M14 0.6 Q15.4 0.6 16.2 2 L27.2 20.8 Q28.3 24.2 25 24.2 H3 Q-0.3 24.2 0.8 20.8 L11.8 2 Q12.6 0.6 14 0.6 Z" fill="#ec1c24"/><rect x="12.5" y="7.6" width="3" height="8.6" rx="1.2" fill="#fff"/><circle cx="14" cy="19.4" r="1.8" fill="#fff"/></svg>
<div class="t" style="top:732.5px;font-size:21.4px;right:251.0px;">79 500</div>
<div class="t" style="top:732.5px;font-size:21.4px;right:81.2px;">87 000</div>
<div class="abs" style="left:286px;top:795.0px;width:2259px;height:81.0px;background:#dde8f7"></div>
<div class="cb" style="left:300.2px;top:809.9px"><svg style="position:absolute;left:3.5px;top:4.5px" width="18" height="16" viewBox="0 0 18 16"><path d="M2.3 8.3 L6.8 12.6 L15.3 3.6" stroke="#1d1f23" stroke-width="3.1" fill="none"/></svg></div>
<div class="t" style="top:814.0px;font-size:21.4px;left:355.3px;transform:scaleX(0.915);transform-origin:left center;">SM-M317FZK...</div>
<svg class="abs" style="left:580.5px;top:808.3px" width="56" height="57" viewBox="0 0 56 57"><defs><linearGradient id="m31b" x1="0" y1="0" x2="0" y2="1"><stop offset="0" stop-color="#6a6d72"/><stop offset="0.5" stop-color="#26282c"/><stop offset="1" stop-color="#0d0e10"/></linearGradient></defs><rect x="0" y="0" width="56" height="57" rx="6" fill="#fff"/><rect x="6.5" y="2" width="20" height="53" rx="2" fill="url(#m31b)"/><rect x="8.5" y="5" width="7" height="11" rx="2.5" fill="#151515"/><rect x="25" y="2" width="22.5" height="53" rx="2" fill="#5b3aa6"/><circle cx="31" cy="8" r="3" fill="#c9a7f0"/><circle cx="42" cy="15" r="4" fill="#e8734a"/><path d="M27 40 L36 23 L46 40 Z" fill="#f2b63a"/><path d="M31 53 L37 37 L45 53 Z" fill="#b78ce6"/><rect x="29" y="43" width="6" height="9" fill="#e05a3a"/></svg>
<div class="sn" style="left:721px;top:814.0px">SN</div>
<div class="t" style="top:814.0px;font-size:21.4px;left:755.5px;transform:scaleX(0.957);transform-origin:left center;">Samsung Galaxy M31s 2020 M317F</div>
<div class="t" style="top:842.3px;font-size:21.4px;left:720.3px;transform:scaleX(0.966);transform-origin:left center;">6/128Gb Black</div>
<svg class="abs" style="left:1195px;top:810.5px" width="22" height="26" viewBox="0 0 22 26"><path d="M11 0.5 C5 0.5 0.5 5 0.5 10.5 C0.5 16.5 11 25.8 11 25.8 C11 25.8 21.5 16.5 21.5 10.5 C21.5 5 17 0.5 11 0.5 Z" fill="#f59300"/><circle cx="11" cy="10.2" r="4.5" fill="#fff"/></svg>
<div class="t" style="top:814.0px;font-size:21.4px;right:1227.0px;transform:scaleX(0.949);transform-origin:right center;">1 шт</div>
<div class="t" style="top:814.0px;font-size:21.4px;right:1057.5px;">-</div>
<div class="t" style="top:814.0px;font-size:21.4px;left:1531.3px;transform:scaleX(0.950);transform-origin:left center;">12 мес</div>
<div class="t" style="top:814.0px;font-size:21.4px;right:760.7px;">25 262</div>
<div class="t" style="top:814.0px;font-size:21.4px;right:590.7px;">0</div>
<div class="t" style="top:814.0px;font-size:21.4px;right:420.8px;">11 750</div>
<div class="t" style="top:814.0px;font-size:21.4px;right:251.0px;">17 625</div>
<div class="t" style="top:814.0px;font-size:21.4px;right:81.2px;">17 625</div>
<div class="abs" style="left:286px;top:876.5px;width:2259px;height:81.0px;background:#ffffff"></div>
<div class="cb" style="left:300.2px;top:891.4px"></div>
<div class="sn" style="left:721px;top:895.5px">SN</div>
<div class="t" style="top:895.5px;font-size:21.4px;left:755.5px;transform:scaleX(0.975);transform-origin:left center;">realme 6 Pro 8/128Gb (Blue)</div>
<div class="t" style="top:895.5px;font-size:21.4px;right:1227.0px;transform:scaleX(0.949);transform-origin:right center;">1 шт</div>
<div class="t" style="top:895.5px;font-size:21.4px;right:1057.5px;">-</div>
<div class="t" style="top:895.5px;font-size:21.4px;left:1531.3px;transform:scaleX(0.950);transform-origin:left center;">12 мес</div>
<div class="t" style="top:895.5px;font-size:21.4px;right:760.7px;">23 650</div>
<div class="t" style="top:895.5px;font-size:21.4px;right:590.7px;">0</div>
<div class="t" style="top:895.5px;font-size:21.4px;right:420.8px;">11 000</div>
<div class="t" style="top:895.5px;font-size:21.4px;right:251.0px;">16 500</div>
<div class="t" style="top:895.5px;font-size:21.4px;right:81.2px;">16 500</div>
<div class="abs" style="left:286px;top:956.5px;width:2259px;height:82.5px;background:#dde8f7"></div>
<div class="cb" style="left:300.2px;top:972.9px"><svg style="position:absolute;left:3.5px;top:4.5px" width="18" height="16" viewBox="0 0 18 16"><path d="M2.3 8.3 L6.8 12.6 L15.3 3.6" stroke="#1d1f23" stroke-width="3.1" fill="none"/></svg></div>
<div class="t" style="top:977.0px;font-size:21.4px;left:355.3px;transform:scaleX(0.919);transform-origin:left center;">QE65Q77TA...</div>
<div class="sn" style="left:721px;top:977.0px">SN</div>
<div class="t" style="top:977.0px;font-size:21.4px;left:755.5px;transform:scaleX(0.972);transform-origin:left center;">Телевизор Samsung 65" 4K UHD Smart</div>
<div class="t" style="top:1005.3px;font-size:21.4px;left:720.3px;transform:scaleX(0.808);transform-origin:left center;">TV</div>
<svg class="abs" style="left:1195px;top:973.5px" width="22" height="26" viewBox="0 0 22 26"><path d="M11 0.5 C5 0.5 0.5 5 0.5 10.5 C0.5 16.5 11 25.8 11 25.8 C11 25.8 21.5 16.5 21.5 10.5 C21.5 5 17 0.5 11 0.5 Z" fill="#f59300"/><circle cx="11" cy="10.2" r="4.5" fill="#fff"/></svg>
<div class="t" style="top:977.0px;font-size:21.4px;right:1227.0px;transform:scaleX(0.949);transform-origin:right center;">1 шт</div>
<div class="t" style="top:977.0px;font-size:21.4px;right:1057.5px;">-</div>
<div class="t" style="top:977.0px;font-size:21.4px;left:1531.3px;transform:scaleX(0.950);transform-origin:left center;">12 мес</div>
<div class="t" style="top:977.0px;font-size:21.4px;right:760.7px;">139 750</div>
<div class="t" style="top:977.0px;font-size:21.4px;right:590.7px;">0</div>
<div class="t" style="top:977.0px;font-size:21.4px;right:420.8px;">65 000</div>
<div class="t" style="top:977.0px;font-size:21.4px;right:251.0px;">97 500</div>
<div class="t" style="top:977.0px;font-size:21.4px;right:81.2px;">97 500</div>
<div class="abs" style="left:286px;top:1039.5px;width:2259px;height:81.0px;background:#ffffff"></div>
<div class="abs" style="left:286px;top:1119.8px;width:2259px;height:1.5px;background:#e8e8ec"></div>
<div class="cb" style="left:300.2px;top:1054.4px"></div>
<div class="t" style="top:1058.5px;font-size:21.4px;left:720.3px;transform:scaleX(0.988);transform-origin:left center;">Чехол iphone 11</div>
<div class="t" style="top:1058.5px;font-size:21.4px;right:1227.0px;transform:scaleX(0.949);transform-origin:right center;">2 шт</div>
<div class="t" style="top:1058.5px;font-size:21.4px;right:1057.5px;">-</div>
<div class="t" style="top:1058.5px;font-size:21.4px;left:1531.3px;transform:scaleX(0.950);transform-origin:left center;">10 дн.</div>
<div class="t" style="top:1058.5px;font-size:21.4px;right:760.7px;">645</div>
<div class="t" style="top:1058.5px;font-size:21.4px;right:590.7px;">0</div>
<div class="t" style="top:1058.5px;font-size:21.4px;right:420.8px;">300</div>
<div class="t" style="top:1058.5px;font-size:21.4px;right:251.0px;">450</div>
<div class="t" style="top:1058.5px;font-size:21.4px;right:81.2px;">360</div>
<div class="abs" style="left:286px;top:1121.0px;width:2259px;height:81.0px;background:#ffffff"></div>
<div class="cb" style="left:300.2px;top:1135.9px"></div>
<div class="t" style="top:1140.0px;font-size:21.4px;left:720.3px;transform:scaleX(0.995);transform-origin:left center;">Доска магнитная</div>
<div class="t" style="top:1140.0px;font-size:21.4px;right:1227.0px;transform:scaleX(0.949);transform-origin:right center;">2 шт</div>
<div class="t" style="top:1140.0px;font-size:21.4px;right:1057.5px;">-</div>
<div class="t" style="top:1140.0px;font-size:21.4px;left:1531.3px;transform:scaleX(0.952);transform-origin:left center;">3 мес</div>
<div class="t" style="top:1140.0px;font-size:21.4px;right:760.7px;">774</div>
<div class="t" style="top:1140.0px;font-size:21.4px;right:590.7px;">0</div>
<div class="t" style="top:1140.0px;font-size:21.4px;right:420.8px;">360</div>
<div class="t" style="top:1140.0px;font-size:21.4px;right:251.0px;">540</div>
<div class="t" style="top:1140.0px;font-size:21.4px;right:81.2px;">550</div>
<div class="abs" style="left:286px;top:1201.0px;width:2259px;height:72.79999999999995px;background:#dde8f7"></div>
<div class="sn" style="left:721px;top:1221.5px">SN</div>
<div class="t" style="top:1221.5px;font-size:21.4px;left:755.5px;transform:scaleX(0.972);transform-origin:left center;">Apple iPhone 11 Pro 512Gb Silver</div>
<svg class="abs" style="left:1195px;top:1218.0px" width="22" height="26" viewBox="0 0 22 26"><path d="M11 0.5 C5 0.5 0.5 5 0.5 10.5 C0.5 16.5 11 25.8 11 25.8 C11 25.8 21.5 16.5 21.5 10.5 C21.5 5 17 0.5 11 0.5 Z" fill="#f59300"/><circle cx="11" cy="10.2" r="4.5" fill="#fff"/></svg>
<div class="t" style="top:1221.5px;font-size:21.4px;right:1227.0px;transform:scaleX(0.949);transform-origin:right center;">2 шт</div>
<div class="t" style="top:1221.5px;font-size:21.4px;right:1057.5px;">-</div>
<div class="t" style="top:1221.5px;font-size:21.4px;left:1531.3px;transform:scaleX(0.950);transform-origin:left center;">12 мес</div>
<div class="t" style="top:1221.5px;font-size:21.4px;right:760.7px;">152 650</div>
<div class="t" style="top:1221.5px;font-size:21.4px;right:590.7px;">0</div>
<div class="t" style="top:1221.5px;font-size:21.4px;right:420.8px;">70 000</div>
<div class="t" style="top:1221.5px;font-size:21.4px;right:251.0px;">106 500</div>
<div class="t" style="top:1221.5px;font-size:21.4px;right:81.2px;">106 500</div>
<div class="abs" style="left:342px;top:469.5px;width:7px;height:804px;background:linear-gradient(90deg,rgba(60,60,80,.045),rgba(60,60,80,0))"></div>
<div class="abs" style="left:259px;top:1273.8px;width:2301px;height:167px;background:#fff"></div>
<div class="abs" style="left:286px;top:1171.6px;width:406.4px;height:113.5px;background:#fff;border:1.5px solid #d0d0d3;border-radius:6px;box-shadow:0 3px 12px rgba(0,0,0,.07)"></div>
<div class="t" style="top:1198.5px;font-size:20.5px;left:315.0px;transform:scaleX(1.070);transform-origin:left center;">Печатать ценники</div>
<div class="t" style="top:1240.8px;font-size:20.5px;left:315.0px;transform:scaleX(1.057);transform-origin:left center;">Печатать этикетки</div>
<div class="btn" style="left:286.8px;top:1290.4px;width:112.4px;height:56.3px"></div>
<svg class="abs" style="left:314px;top:1304px" width="29" height="29" viewBox="0 0 29 29" fill="none" stroke="#1e2125" stroke-width="2.1" stroke-linejoin="round"><path d="M7.6 7 V2.8 Q7.6 1.3 9.1 1.3 H20.9 Q22.4 1.3 22.4 2.8 V7"/><path d="M7.2 21.8 H4.3 Q1.3 21.8 1.3 18.8 V9.8 Q1.3 6.8 4.3 6.8 H24.7 Q27.7 6.8 27.7 9.8 V18.8 Q27.7 21.8 24.7 21.8 H22"/><rect x="7.6" y="18.2" width="14.8" height="9.5" rx="2.3"/><circle cx="7.6" cy="13" r="1.2" fill="#1e2125" stroke="none"/></svg>
<div class="abs" style="left:355.9px;top:1305px;width:1.5px;height:26.8px;background:#9c9ea1"></div>
<svg class="abs" style="left:370.5px;top:1313.8px" width="14" height="10" viewBox="0 0 14 10"><path d="M1.5 8 L7 2.5 L12.5 8" stroke="#a2a4a7" stroke-width="2.1" fill="none"/></svg>
<div class="btn" style="left:414.1px;top:1290.4px;width:186.5px;height:56.3px"></div>
<div class="t" style="top:1308.0px;font-size:22px;left:441.4px;transform:scaleX(1.039);transform-origin:left center;">Действия</div>
<div class="abs" style="left:557.3px;top:1305px;width:1.5px;height:26.8px;background:#9c9ea1"></div>
<svg class="abs" style="left:572px;top:1314px" width="14" height="10" viewBox="0 0 14 10"><path d="M1.5 2 L7 7.5 L12.5 2" stroke="#a2a4a7" stroke-width="2.1" fill="none"/></svg>
<div class="t" style="top:1309.6px;font-size:21.5px;left:614.4px;transform:scaleX(0.979);transform-origin:left center;">Выбрано — <b>5</b></div>
<div class="abs" style="left:762px;top:1303px;width:31px;height:31px;border-radius:50%;background:#c6c6c9"></div>
<svg class="abs" style="left:769.5px;top:1310.5px" width="16" height="16" viewBox="0 0 16 16"><path d="M2 2 L14 14 M14 2 L2 14" stroke="#fff" stroke-width="1.9"/></svg>
<div class="abs" style="left:2460px;top:1290px;width:85px;height:57px;background:#ef1c22;border-radius:6px"></div>
<svg class="abs" style="left:2488px;top:1302px" width="29" height="32" viewBox="0 0 29 32" fill="#fff"><path d="M9.2 8.5 V5.5 Q9.2 2.2 14.6 2.2 Q20 2.2 20 5.5 V8.5 H17.6 V6 Q17.6 4.6 14.6 4.6 Q11.6 4.6 11.6 6 V8.5 Z"/><path d="M1.8 9 Q1.5 7.9 3 7.9 H26.2 Q27.7 7.9 27.4 9 L26.6 11.3 H2.6 Z"/><path d="M4.8 10.8 H24.4 V26.8 Q24.4 30.2 21 30.2 H8.2 Q4.8 30.2 4.8 26.8 Z"/><rect x="10.6" y="14" width="2.5" height="10.2" rx="1.2" fill="#ef1c22"/><rect x="16.2" y="14" width="2.5" height="10.2" rx="1.2" fill="#ef1c22"/></svg>
<svg class="abs" style="left:302px;top:1391.5px" width="22" height="30" viewBox="0 0 22 30"><path d="M17.5 3.5 L6 15 L17.5 26.5" stroke="#c6c7ca" stroke-width="4.6" fill="none" stroke-linecap="round" stroke-linejoin="round"/></svg>
<div class="abs" style="left:341.2px;top:1378.3px;width:56.3px;height:56.3px;background:#efeff1;border:1.5px solid #d5d5d8;border-radius:7px"></div>
<div class="t" style="top:1396.6px;font-size:22px;left:363.0px;transform:scaleX(0.718);transform-origin:left center;">1</div>
<div class="t" style="top:1396.6px;font-size:22px;left:422.0px;color:#1a6ed8;transform:scaleX(0.931);transform-origin:left center;">2</div>
<svg class="abs" style="left:474.5px;top:1391.5px" width="22" height="30" viewBox="0 0 22 30"><path d="M4.5 3.5 L16 15 L4.5 26.5" stroke="#1e2125" stroke-width="4.6" fill="none" stroke-linecap="round" stroke-linejoin="round"/></svg>
<div class="t" style="top:1396.6px;font-size:22px;left:525.4px;transform:scaleX(0.924);transform-origin:left center;">Всего — <b>63</b></div>
</body>
</html>
